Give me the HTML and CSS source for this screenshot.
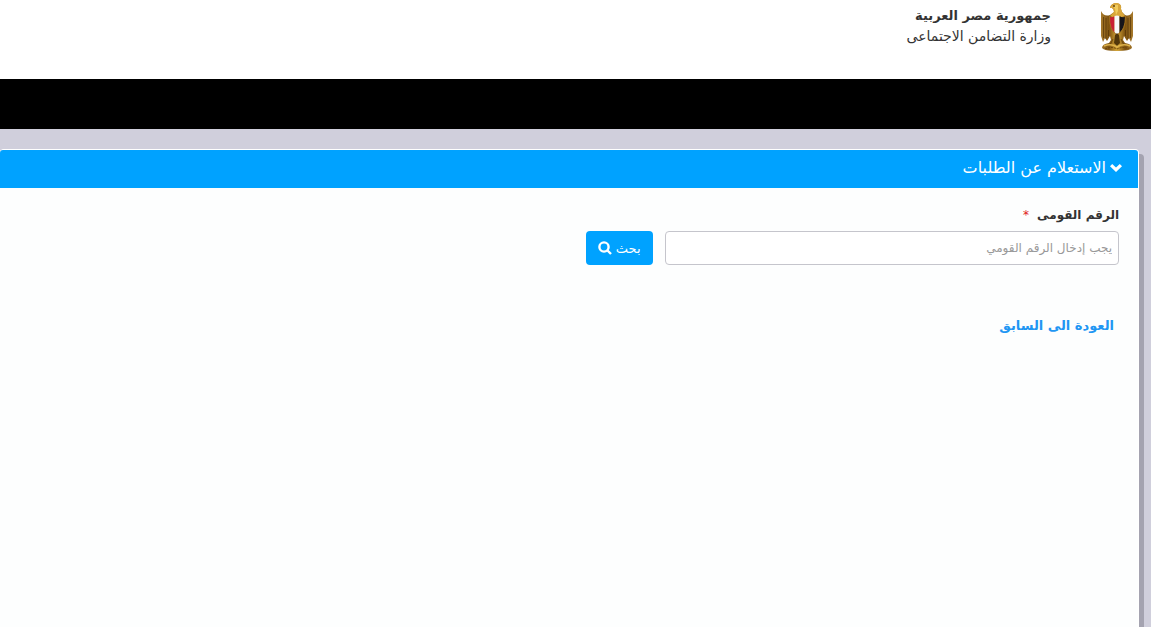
FILE: index.html
```
<!DOCTYPE html>
<html lang="ar" dir="rtl">
<head>
<meta charset="utf-8">
<title>الاستعلام عن الطلبات</title>
<link rel="stylesheet" href="styles.css">
</head>
<body>
<header class="site-header">
  <svg class="emblem" viewBox="0 0 36 50" aria-hidden="true">
    <defs>
      <linearGradient id="gold" x1="0" x2="1" y1="0" y2="0">
        <stop offset="0" stop-color="#a77a2c"/><stop offset=".25" stop-color="#7c510f"/>
        <stop offset=".5" stop-color="#d6a737"/><stop offset=".75" stop-color="#7c510f"/>
        <stop offset="1" stop-color="#a77a2c"/>
      </linearGradient>
    </defs>
    <path fill="url(#gold)" d="M2 9Q5 15 11 13L15 10Q15 7 13 6L11 6Q12 1 18 1Q23 2 22 7L23 10L26 13Q31 15 34 9L34 34L32 40L30 36L28 39L25 34L24 38L26 41Q33 42 33 46Q31 49 18 49Q5 49 3 46Q3 42 10 41L12 38L11 34L8 39L6 36L4 40L2 34Z"/>
    <path fill="#d9a63a" d="M11 6Q12 1 18 1Q23 2 22 7L23 10L26 14Q18 17 11 14L15 10Q15 7 13 6Z"/>
    <path fill="#f0cb5c" d="M14 4Q16 2 19 3L19 9L17 13L16 7Z"/>
    <circle cx="15" cy="4" r=".9" fill="#53340b"/>
    <path fill="none" stroke="#553407" stroke-width=".7" d="M4.500 15V36M7 16V37M9.500 28V34M31.500 15V36M29 16V37M26.500 28V34M14 37L11 43M22 37L25 43"/>
    <path fill="#c91f33" d="M11 15Q13 16 15.500 14V31Q10 26 11 15Z"/>
    <path fill="#f8f8f8" d="M15.500 14Q18 13 20.500 14V30L18 33L15.500 30Z"/>
    <path fill="#17151a" d="M20.500 14Q23 16 26 15Q26 26 20.500 31Z"/>
    <path fill="none" stroke="#a67520" stroke-width=".8" d="M10.500 14Q10 28 18 33Q27 28 26.500 14"/>
    <path fill="#51370b" d="M16 33L18 31L20 33L21 41L18 44L15 41Z"/>
    <path fill="none" stroke="#ddb24a" stroke-width="1.600" d="M5 44Q12 41 18 45Q24 41 31 44"/>
    <path fill="none" stroke="#684208" stroke-width="1" stroke-dasharray="2 1" d="M6 47Q13 44 18 47Q24 44 30 47"/>
  </svg>
  <div class="authority">
    <strong class="country">جمهورية مصر العربية</strong>
    <span class="ministry">وزارة التضامن الاجتماعى</span>
  </div>
</header>
<nav class="nav-bar"></nav>
<main class="content">
  <section class="panel">
    <h1 class="panel-title">
      <svg class="chevron" viewBox="0 0 12 8" aria-hidden="true"><path d="M0 2.200L2.200 0L6 3.600L9.800 0L12 2.200L6 8Z"/></svg>
      <span>الاستعلام عن الطلبات</span>
    </h1>
    <form class="search-form">
      <label class="field-label" for="national-id">الرقم القومى <span class="required">*</span></label>
      <div class="search-row">
        <input class="field" id="national-id" type="text" placeholder="يجب إدخال الرقم القومي">
        <button class="search-button" type="button">
          <span>بحث</span>
          <svg class="search-icon" viewBox="0 0 14 14" aria-hidden="true"><circle cx="6" cy="6" r="4.600"/><path d="M9.500 9.500L13 13"/></svg>
        </button>
      </div>
      <a class="back-link" href="#">العودة الى السابق</a>
    </form>
  </section>
</main>
</body>
</html>
```
FILE: styles.css
```
* { box-sizing: border-box; }
body {
  margin: 0;
  min-height: 100vh;
  display: flex;
  flex-direction: column;
  overflow: hidden;
  background: #d0cfdc;
  color: #333;
  font: 14px/20px "DejaVu Sans", sans-serif;
}
.site-header {
  display: flex;
  align-items: flex-start;
  gap: 48px;
  height: 79px;
  padding: 2px 16px 0;
  background: #fff;
}
.emblem { width: 36px; height: 50px; }
.authority { display: flex; flex-direction: column; padding-top: 4px; }
.country { font-size: 13px; }
.ministry { font-size: 14px; }
.nav-bar { height: 50px; background: #000; }
.content { flex: 1; display: flex; padding: 20px 12px 0 0; }
.panel {
  flex: 1;
  border: 1px solid #fff;
  border-bottom: 0;
  border-left: 0;
  border-radius: 4px 4px 0 0;
  background: #fdfefe;
  box-shadow: 5px 5px 0 #a4a3b0;
}
.panel-title {
  display: flex;
  align-items: center;
  gap: 4px;
  height: 38px;
  margin: 0;
  padding: 0 16px 2px;
  border-radius: 3px 3px 0 0;
  background: #00a2ff;
  color: #fff;
  font-size: 16px;
  font-weight: 400;
}
.chevron { width: 12px; height: 8px; fill: #fff; }
.search-form { padding: 15px 19px; }
.field-label { display: block; font-size: 12px; font-weight: 700; line-height: 24px; }
.required { margin-right: 4px; color: #e02020; font-size: 12px; font-weight: 400; }
.search-row { display: flex; align-items: center; gap: 12px; padding-top: 4px; }
.field {
  width: 41.3%;
  height: 34px;
  padding: 0 6px;
  border: 1px solid #c5c5cc;
  border-radius: 4px;
  background: #fff;
  color: #333;
  font: 12px "DejaVu Sans", sans-serif;
}
.field::placeholder { color: #999; opacity: 1; }
.search-button {
  display: flex;
  align-items: center;
  justify-content: center;
  gap: 4px;
  width: 67px;
  height: 34px;
  padding: 0;
  border: 0;
  border-radius: 4px;
  background: #00a2ff;
  color: #fff;
  font: 13px "DejaVu Sans", sans-serif;
}
.search-icon { width: 14px; height: 14px; fill: none; stroke: #fff; stroke-width: 2.4; }
.back-link {
  display: inline-block;
  margin: 51px 5px 0;
  color: #2196f3;
  font-size: 13px;
  font-weight: 700;
  text-decoration: none;
}
```
